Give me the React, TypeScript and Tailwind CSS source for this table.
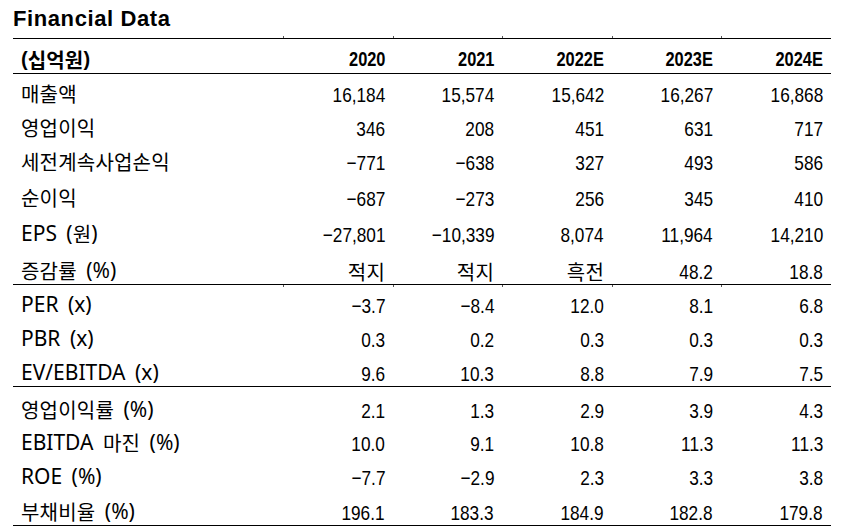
import React from "react";

const COLS = "grid grid-cols-[270px_110px_109px_110px_109px_110px]";
const NUM = "font-['Liberation_Sans',Arial,sans-serif]";
const LAT = "font-['Noto_Sans','Liberation_Sans',sans-serif]";
const HANGUL = /[\uAC00-\uD7A3]/;

function T({ s, bold }: { s: string; bold?: boolean }) {
  const parts = s.split(/([\uAC00-\uD7A3]+)/);
  return (
    <>
      {parts.map((p, i) =>
        HANGUL.test(p) ? (
          <span
            key={i}
            className={`font-['Noto_Sans_CJK_KR',sans-serif] text-[20px] tracking-[0.2px] ${bold ? "font-bold" : "font-normal"}`}
          >
            {p}
          </span>
        ) : (
          <React.Fragment key={i}>{p}</React.Fragment>
        )
      )}
    </>
  );
}

function Num({ s }: { s: string }) {
  if (HANGUL.test(s)) return <T s={s} />;
  return <span className="inline-block origin-right scale-x-[0.82]">{s}</span>;
}

function Row({ cells, h, ticks }: { cells: string[]; h: string; ticks?: boolean }) {
  return (
    <div className={`${COLS} ${h}`}>
      <div
        className={`flex items-end pl-[8px] pb-[3px] ${LAT} text-[21px] leading-[21px] whitespace-pre [word-spacing:4px]`}
      >
        <T s={cells[0]} />
      </div>
      {cells.slice(1).map((c, i) => (
        <div
          key={i}
          className={`relative flex items-end justify-end pr-[8px] pb-[2px] ${NUM} text-[21px] leading-[21px] whitespace-pre`}
        >
          {ticks && <span className="absolute left-0 top-0 h-[2px] w-px bg-[#555]" />}
          <Num s={c} />
        </div>
      ))}
    </div>
  );
}

const sec1: [string[], string][] = [
  [["매출액", "16,184", "15,574", "15,642", "16,267", "16,868"], "h-[33px]"],
  [["영업이익", "346", "208", "451", "631", "717"], "h-[34px]"],
  [["세전계속사업손익", "−771", "−638", "327", "493", "586"], "h-[34px]"],
  [["순이익", "−687", "−273", "256", "345", "410"], "h-[36px]"],
  [["EPS (원)", "−27,801", "−10,339", "8,074", "11,964", "14,210"], "h-[36px]"],
  [["증감률 (%)", "적지", "적지", "흑전", "48.2", "18.8"], "h-[37px]"],
];

const sec2: [string[], string][] = [
  [["PER (x)", "−3.7", "−8.4", "12.0", "8.1", "6.8"], "h-[33px]"],
  [["PBR (x)", "0.3", "0.2", "0.3", "0.3", "0.3"], "h-[34px]"],
  [["EV/EBITDA (x)", "9.6", "10.3", "8.8", "7.9", "7.5"], "h-[34px]"],
];

const sec3: [string[], string][] = [
  [["영업이익률 (%)", "2.1", "1.3", "2.9", "3.9", "4.3"], "h-[36px]"],
  [["EBITDA 마진 (%)", "10.0", "9.1", "10.8", "11.3", "11.3"], "h-[33px]"],
  [["ROE (%)", "−7.7", "−2.9", "2.3", "3.3", "3.8"], "h-[34px]"],
  [["부채비율 (%)", "196.1", "183.3", "184.9", "182.8", "179.8"], "h-[35px]"],
];

export default function App() {
  return (
    <div className="w-[842px] h-[530px] bg-white text-black overflow-hidden">
      <div className="ml-[13px] w-[818px]">
        <div className="h-[36px] pt-[8px]">
          <div className="font-['Liberation_Sans',Arial,sans-serif] font-bold text-[22px] leading-[22px] tracking-[0.6px]">
            Financial Data
          </div>
        </div>
        <div className={`${COLS} h-[2px]`}>
          <div />
          <div className="border-l border-[#555]" />
          <div className="border-l border-[#555]" />
          <div className="border-l border-[#555]" />
          <div className="border-l border-[#555]" />
          <div className="border-l border-[#555]" />
        </div>
        <div className="h-px bg-black" />
        <div className={`${COLS} h-[34px]`}>
          <div className="flex items-end pl-[8px] pb-[3px] font-['Liberation_Sans',sans-serif] font-bold text-[20px] leading-[21px] whitespace-pre">
            (<T s="십억원" bold />)
          </div>
          {["2020", "2021", "2022E", "2023E", "2024E"].map((y) => (
            <div
              key={y}
              className={`flex items-end justify-end pr-[8px] pb-[3px] ${NUM} font-bold text-[20px] leading-[21px]`}
            >
              <span className="inline-block origin-right scale-x-[0.82]">{y}</span>
            </div>
          ))}
        </div>
        <div className="h-px bg-black" />
        {sec1.map(([c, h], i) => (
          <Row key={i} cells={c} h={h} />
        ))}
        <div className="h-px bg-black" />
        {sec2.map(([c, h], i) => (
          <Row key={i} cells={c} h={h} ticks={i === 0} />
        ))}
        <div className="h-px bg-black" />
        {sec3.map(([c, h], i) => (
          <Row key={i} cells={c} h={h} />
        ))}
        <div className="h-px bg-black" />
      </div>
    </div>
  );
}
